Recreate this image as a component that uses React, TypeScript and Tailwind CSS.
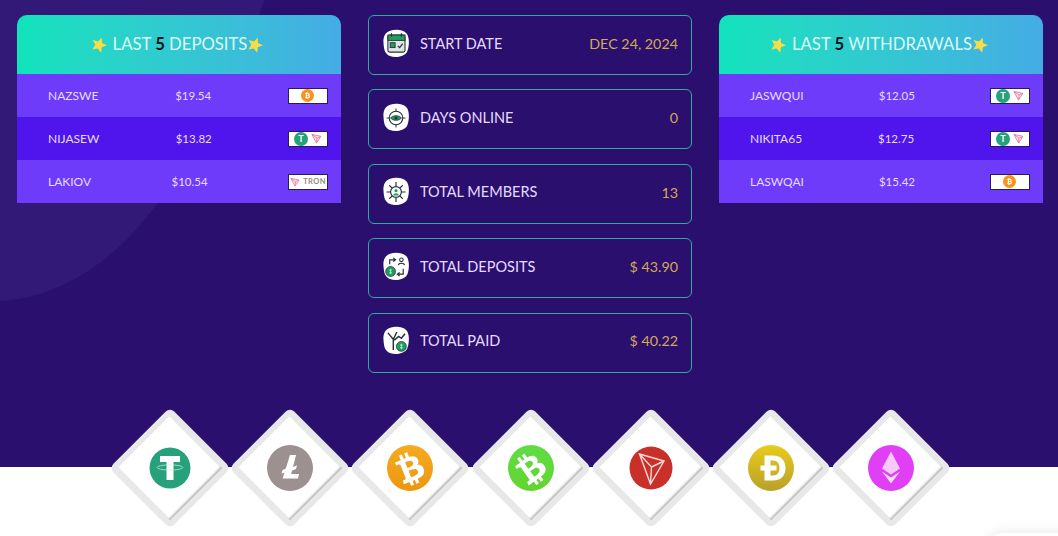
import { FaBtc } from 'react-icons/fa';

const deposits = [
    { name: 'NAZSWE', amount: '$19.54', coin: 'btc' },
    { name: 'NIJASEW', amount: '$13.82', coin: 'usdt' },
    { name: 'LAKIOV', amount: '$10.54', coin: 'tron' },
];

const withdrawals = [
    { name: 'JASWQUI', amount: '$12.05', coin: 'usdt' },
    { name: 'NIKITA65', amount: '$12.75', coin: 'usdt' },
    { name: 'LASWQAI', amount: '$15.42', coin: 'btc' },
];

function Star() {
    return (
        <svg width="16" height="16" viewBox="0 0 20 20" className="shrink-0">
            <path d="M13.4 0.6 L13.8 7.4 L20 10.3 L13.6 12.8 L12.8 19.6 L8.4 14.3 L1.7 15.6 L5.4 9.8 L2.1 3.8 L8.7 5.6 Z" fill="#f7dc4a" />
        </svg>
    );
}

function TronMark({ size = 12 }: { size?: number }) {
    return (
        <svg width={size} height={size} viewBox="0 0 12 12">
            <path d="M1 1.5 L10.8 3.6 L6 11 Z M1 1.5 L6.6 5.6 L6 11 M6.6 5.6 L10.8 3.6" fill="#fbe6ec" stroke="#e57f9d" strokeWidth="1" />
        </svg>
    );
}

function Badge({ coin }: { coin: string }) {
    return (
        <div className="w-[40px] h-[16px] bg-white border border-[#2a1a55] flex items-center justify-center gap-[3px] overflow-hidden">
            {coin === 'btc' && (
                <span className="w-[13px] h-[13px] rounded-full bg-[#f7931a] flex items-center justify-center text-white text-[7px]">
                    <FaBtc />
                </span>
            )}
            {coin === 'usdt' && (
                <>
                    <span className="w-[14px] h-[14px] rounded-full bg-[#26a17b] flex items-center justify-center text-white text-[9px] font-bold leading-none">T</span>
                    <TronMark size={11} />
                </>
            )}
            {coin === 'tron' && (
                <>
                    <TronMark size={10} />
                    <span className="text-[7.5px] font-bold text-[#8b8b8b] tracking-[0.4px] leading-none">TRON</span>
                </>
            )}
        </div>
    );
}

function TxTable({ label, rows }: { label: string; rows: { name: string; amount: string; coin: string }[] }) {
    return (
        <div>
            <div className="h-[59px] pr-[4px] rounded-t-[10px] bg-gradient-to-r from-[#10e3bb] to-[#44ace4] flex items-center justify-center text-[16.7px] text-[#dcfbf6]">
                <Star />
                <span className="ml-[6px]">LAST <b className="text-[#04121a]">5</b> {label}</span>
                <Star />
            </div>
            {rows.map((row, i) => (
                <div
                    key={row.name}
                    className={`h-[43px] pl-[31px] pr-[13px] flex items-center justify-between text-[#e6dcff] ${i === 1 ? 'bg-[#5015ec]' : 'bg-[#6f3bfb]'}`}
                >
                    <span className="text-[12px]">{row.name}</span>
                    <span className="text-[11.5px]">{row.amount}</span>
                    <Badge coin={row.coin} />
                </div>
            ))}
        </div>
    );
}

function BlobIcon({ children }: { children: React.ReactNode }) {
    return (
        <svg width="28" height="30" viewBox="0 0 28 30" className="shrink-0">
            <path d="M9 1.5 C14 0 22 1 25 5 C28 10 27 19 25 23 C22 28 13 29 8 27 C3 25 2 21 1.5 14 C1 8 3 3 9 1.5 Z" fill="#fff" />
            <g transform="translate(1.4 1.5) scale(0.9)">{children}</g>
        </svg>
    );
}

const ink = '#27303a';
const green = '#1f9d62';

const icons: Record<string, React.ReactNode> = {
    date: (
        <>
            <rect x="5" y="5" width="19" height="19" rx="2" fill="#dfe5e2" stroke={ink} strokeWidth="1.2" />
            <rect x="5" y="5" width="19" height="6" fill={green} stroke={ink} strokeWidth="1" />
            <path d="M9 3 V7 M20 3 V7" stroke={ink} strokeWidth="1.3" />
            <rect x="7.5" y="13.5" width="5.5" height="5.5" fill={green} stroke={ink} strokeWidth="1" />
            <path d="M16 17 L18 19 L21.5 14.5" fill="none" stroke={ink} strokeWidth="1.3" />
        </>
    ),
    days: (
        <>
            <circle cx="14" cy="15" r="7.5" fill="none" stroke={ink} strokeWidth="1.2" />
            <path d="M14 4.5 V8 M14 22 V25.5 M3.5 15 H7 M21 15 H24.5" stroke={ink} strokeWidth="1.1" />
            <path d="M8 15 C10 11.5 18 11.5 20 15 C18 18.5 10 18.5 8 15 Z" fill={green} stroke={ink} strokeWidth="0.8" />
            <circle cx="14" cy="15" r="1.8" fill={ink} />
        </>
    ),
    members: (
        <>
            <circle cx="14" cy="15" r="6" fill="none" stroke={ink} strokeWidth="1.3" />
            <path d="M14 4 V9 M14 21 V26 M3.5 15 H8 M20 15 H24.5 M6.5 7.5 L10 11 M21.5 7.5 L18 11 M6.5 22.5 L10 19 M21.5 22.5 L18 19" stroke={ink} strokeWidth="1.3" />
            <circle cx="14" cy="13.5" r="1.7" fill={green} />
            <path d="M10.8 19 C11.5 15.5 16.5 15.5 17.2 19 Z" fill={green} />
        </>
    ),
    deposits: (
        <>
            <path d="M7 12 V7 H13 M11 5 L13.5 7 L11 9 M22 17 V23 H16 M18 21 L15.5 23 L18 25" fill="none" stroke={ink} strokeWidth="1.3" />
            <circle cx="20" cy="7" r="2" fill="none" stroke={ink} strokeWidth="1.2" />
            <path d="M16.5 13 C17 10 23 10 23.5 13" fill="none" stroke={ink} strokeWidth="1.2" />
            <circle cx="8" cy="20" r="5.5" fill={green} stroke={ink} strokeWidth="0.8" />
            <path d="M8 17 V23 M6.5 18.5 H9.5 M6.5 21.5 H9.5" stroke="#d8f5e4" strokeWidth="0.8" />
        </>
    ),
    paid: (
        <>
            <path d="M5 6 L11 13 V25 M15 5 L11 13 M12 14 L17 10 L20 12 L24 7" fill="none" stroke={ink} strokeWidth="1.6" />
            <circle cx="20" cy="21" r="5.5" fill={green} stroke={ink} strokeWidth="0.8" />
            <path d="M20 18 V24 M18.5 19.5 H21.5 M18.5 22.5 H21.5" stroke="#d8f5e4" strokeWidth="0.8" />
        </>
    ),
};

const stats = [
    { icon: 'date', label: 'START DATE', value: 'DEC 24, 2024' },
    { icon: 'days', label: 'DAYS ONLINE', value: '0' },
    { icon: 'members', label: 'TOTAL MEMBERS', value: '13' },
    { icon: 'deposits', label: 'TOTAL DEPOSITS', value: '$ 43.90' },
    { icon: 'paid', label: 'TOTAL PAID', value: '$ 40.22' },
];

function Coin({ name }: { name: string }) {
    if (name === 'usdt') {
        return (
            <svg width="42" height="42" viewBox="0 0 42 42">
                <circle cx="21" cy="21" r="20.5" fill="#26a17b" />
                <path d="M11 9 H31 V15 H24.5 V33 H17.5 V15 H11 Z" fill="#fff" />
                <ellipse cx="21" cy="20.5" rx="13" ry="2.6" fill="none" stroke="#cdeee2" strokeWidth="0.7" />
            </svg>
        );
    }
    if (name === 'ltc') {
        return (
            <svg width="46" height="46" viewBox="0 0 46 46">
                <circle cx="23" cy="23" r="23" fill="#9c9090" />
                <path d="M23 10 H29 L26 22 L30 20.3 L29 24 L25 25.8 L24 29 H32 L31 33.5 H15.5 L17.6 27.5 L14.5 28.8 L15.5 25 L18.8 23.5 Z" fill="#fff" />
            </svg>
        );
    }
    if (name === 'btc' || name === 'bch') {
        const bg = name === 'btc' ? 'bg-gradient-to-b from-[#f5ab1f] to-[#ec9710]' : 'bg-gradient-to-b from-[#5fdc45] to-[#62d52e]';
        const tilt = name === 'btc' ? 'rotate-[-22deg]' : 'rotate-[-36deg]';
        return (
            <div className={`w-[46px] h-[46px] rounded-full flex items-center justify-center text-white text-[33px] ${bg}`}>
                <FaBtc className={tilt} />
            </div>
        );
    }
    if (name === 'trx') {
        return (
            <svg width="44" height="44" viewBox="0 0 44 44">
                <circle cx="22" cy="22" r="21.5" fill="#c9302a" />
                <path d="M10.5 8 L35 15 L21.5 38 Z M10.5 8 L22.5 21 L21.5 38 M22.5 21 L35 15" fill="none" stroke="#f7dad6" strokeWidth="1.4" />
            </svg>
        );
    }
    if (name === 'doge') {
        return (
            <svg width="46" height="46" viewBox="0 0 46 46">
                <defs>
                    <linearGradient id="doge" x1="0" y1="0" x2="0" y2="1">
                        <stop offset="0" stopColor="#e8cc1c" />
                        <stop offset="1" stopColor="#b9a02b" />
                    </linearGradient>
                </defs>
                <circle cx="23" cy="23" r="23" fill="url(#doge)" />
                <path fillRule="evenodd" d="M16.5 10.5 H25 C33.5 10.5 37.5 16 37.5 23 C37.5 30 33.5 35.5 25 35.5 H16.5 V25.5 H12.5 V20.5 H16.5 Z M22.5 15.5 V20.5 H28.5 V25.5 H22.5 V30.5 H25 C29.5 30.5 31.5 27 31.5 23 C31.5 19 29.5 15.5 25 15.5 Z" fill="#fff" />
            </svg>
        );
    }
    return (
        <svg width="46" height="46" viewBox="0 0 46 46">
            <circle cx="23" cy="23" r="23" fill="#e03ff5" />
            <path d="M23 6.5 L32 23.5 L23 29.5 L14 23.5 Z" fill="#f6c9fb" />
            <path d="M23 32.5 L32 26.5 L23 38.5 L14 26.5 Z" fill="#f9def9" />
        </svg>
    );
}

export default function App() {
    return (
        <div className="relative h-[536px] overflow-hidden bg-white font-['Lato',sans-serif]">
            <section className="relative h-[467px] bg-[#2a0f6f] pt-[15px]">
                <svg className="absolute left-0 top-0" width="300" height="310" viewBox="0 0 300 310">
                    <path d="M0 0 H264 C240 80 190 170 133 233 C100 268 55 298 0 301 Z" fill="#321877" />
                </svg>
                <div className="relative grid grid-cols-[324px_324px_324px] gap-[27px] pl-[17px]">
                    <TxTable label="DEPOSITS" rows={deposits} />
                    <div className="flex flex-col gap-[14.4px]">
                        {stats.map((stat) => (
                            <div key={stat.label} className="h-[60px] rounded-[6px] border border-[#31ab9c] pl-[13px] pr-[13px] pb-[3px] flex items-center">
                                <BlobIcon>{icons[stat.icon]}</BlobIcon>
                                <span className="ml-[10px] text-[14.5px] text-[#e6dcff]">{stat.label}</span>
                                <span className="ml-auto text-[14.3px] text-[#d4aa55]">{stat.value}</span>
                            </div>
                        ))}
                    </div>
                    <TxTable label="WITHDRAWALS" rows={withdrawals} />
                </div>
            </section>
            <section className="relative h-[69px] pl-[3px] flex justify-center gap-[34.2px]">
                {['usdt', 'ltc', 'btc', 'bch', 'trx', 'doge', 'eth'].map((coin) => (
                    <div key={coin} className="w-[86px] h-[86px] -mt-[42px] shrink-0 rotate-45 rounded-[6px] border-[6px] border-[#e8e8e8] bg-white shadow-[inset_-2px_0_2px_#bdbdbd] flex items-center justify-center">
                        <div className="-rotate-45 shrink-0 flex items-center justify-center">
                            <Coin name={coin} />
                        </div>
                    </div>
                ))}
            </section>
            <div className="absolute left-[990px] top-[533px] w-[100px] h-[40px] rounded-[12px] bg-white shadow-[0_0_14px_rgba(0,0,0,0.10)]" />
        </div>
    );
}
